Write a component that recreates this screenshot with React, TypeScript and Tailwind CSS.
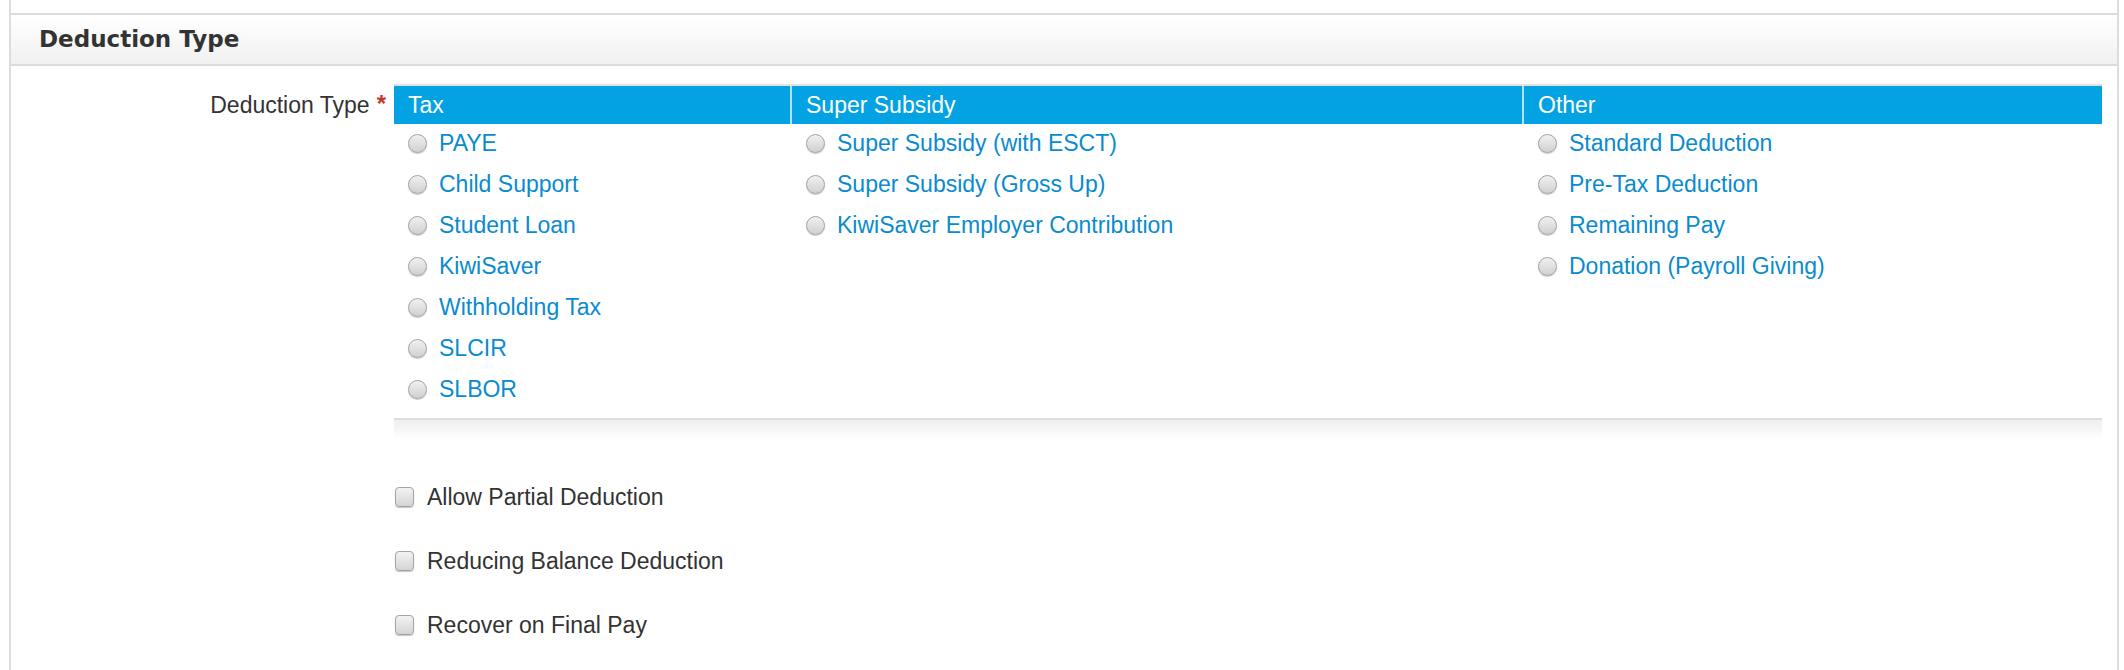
import React from 'react';

type Column = {
  title: string;
  options: string[];
};

const columns: Column[] = [
  {
    title: 'Tax',
    options: [
      'PAYE',
      'Child Support',
      'Student Loan',
      'KiwiSaver',
      'Withholding Tax',
      'SLCIR',
      'SLBOR',
    ],
  },
  {
    title: 'Super Subsidy',
    options: [
      'Super Subsidy (with ESCT)',
      'Super Subsidy (Gross Up)',
      'KiwiSaver Employer Contribution',
    ],
  },
  {
    title: 'Other',
    options: [
      'Standard Deduction',
      'Pre-Tax Deduction',
      'Remaining Pay',
      'Donation (Payroll Giving)',
    ],
  },
];

const flags = [
  'Allow Partial Deduction',
  'Reducing Balance Deduction',
  'Recover on Final Pay',
];

// 회색 라디오 (mac 스타일)
const Radio = () => (
  <span className="inline-block w-[19px] h-[19px] shrink-0 rounded-full border border-[#a3a3a3] bg-linear-to-b from-[#f1f1f1] to-[#d0d0d0] shadow-[0_1px_1px_rgba(0,0,0,0.22)]" />
);

const Checkbox = () => (
  <span className="inline-block w-[19px] h-[20px] shrink-0 rounded-[4px] border border-[#a3a3a3] bg-linear-to-b from-[#f3f3f3] to-[#d4d4d4] shadow-[0_1px_1px_rgba(0,0,0,0.22)]" />
);

export default function App() {
  return (
    <div className="min-h-[670px] bg-white font-['Liberation_Sans',Arial,sans-serif] text-[#333333]">
      <div className="ml-[9px] mr-[5px] min-h-[670px] border-x-2 border-[#dddddd]">
        <div className="h-[13px]" />

        {/* 섹션 헤더 */}
        <div className="flex h-[53px] items-center border-y-2 border-[#dcdcdc] bg-linear-to-b from-white to-[#f1f1f1] pl-[28px]">
          <h2 className="font-['DejaVu_Sans',Verdana,sans-serif] text-[23px] font-bold leading-none text-[#333333]">
            Deduction Type
          </h2>
        </div>

        <div className="flex pt-[18px]">
          {/* 라벨 */}
          <div className="flex h-[40px] w-[383px] shrink-0 items-center justify-end pt-[3px] pr-[8px]">
            <span className="text-[23px] leading-none">Deduction Type</span>
            <span className="ml-[7px] -mt-[4px] text-[24px] leading-none font-bold text-[#c0392b]">*</span>
          </div>

          <div className="w-[1708px] shrink-0">
            {/* 타입 테이블 */}
            <div className="border-t-2 border-[#e2e2e2]">
              <div className="grid h-[38px] grid-cols-[396px_732px_1fr] bg-[#03a3e3]">
                {columns.map((col, i) => (
                  <div
                    key={col.title}
                    className={`flex items-center px-[14px] text-[23px] leading-none text-white ${
                      i > 0 ? 'border-l-2 border-[#b3e2f6]' : ''
                    }`}
                  >
                    {col.title}
                  </div>
                ))}
              </div>

              <div className="-mt-[1px] grid grid-cols-[396px_732px_1fr] pb-[8px]">
                {columns.map((col, i) => (
                  <div key={col.title} className={`flex flex-col ${i > 0 ? 'pl-[2px]' : ''}`}>
                    {col.options.map((opt) => (
                      <label
                        key={opt}
                        className="flex h-[41px] cursor-pointer items-center gap-[12px] pl-[14px]"
                      >
                        <Radio />
                        <span className="text-[23px] leading-none text-[#0a8bd0]">{opt}</span>
                      </label>
                    ))}
                  </div>
                ))}
              </div>

              <div className="h-[22px] border-t-2 border-[#dedede] bg-linear-to-b from-[#efefef] to-white" />
            </div>

            {/* 옵션 체크박스 */}
            <div className="mt-[25px] flex flex-col">
              {flags.map((f) => (
                <label key={f} className="flex h-[64px] cursor-pointer items-center gap-[13px] pl-[1px]">
                  <Checkbox />
                  <span className="text-[23px] leading-none text-[#333333]">{f}</span>
                </label>
              ))}
            </div>
          </div>
        </div>
      </div>
    </div>
  );
}
